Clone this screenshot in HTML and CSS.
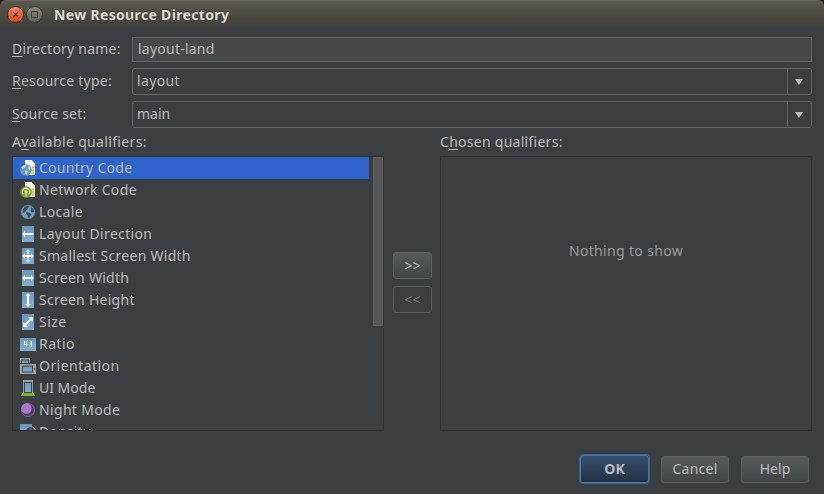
FILE: index.html
```html
<!DOCTYPE html>
<html lang="en">
<head>
<meta charset="utf-8">
<title>New Resource Directory</title>
<link rel="stylesheet" href="styles.css">
</head>
<body>
<svg class="defs" width="0" height="0">
  <defs>
    <linearGradient id="blue" x1="0" y1="0" x2="0" y2="1"><stop offset="0" stop-color="#689abd"/><stop offset="1" stop-color="#80add0"/></linearGradient>
    <symbol id="sim" viewBox="0 0 16 16"><path d="M5 0h6.500l3.500 3.500V15H5z" fill="#fff"/><path d="M11.500 7.500h2.500M11.500 10h2.500M11.500 12.500h2.500" stroke="#e5b920" stroke-width="2"/></symbol>
  </defs>
</svg>
<div class="window">
  <header class="titlebar">
    <span class="wbtn close"><svg width="15" height="15" viewBox="0 0 15 15"><path d="M5 5l5 5m0-5l-5 5" stroke="#56291a" stroke-width="1.300"/></svg></span>
    <span class="wbtn max"><svg width="15" height="15" viewBox="0 0 15 15"><path d="M4.500 4.500h6v6h-6z" fill="none" stroke="#3c3b37"/></svg></span>
    <h1 class="track-l">New Resource Directory</h1>
  </header>
  <main>
    <div class="field first"><label class="track-s"><u>D</u>irectory name:</label><div class="input"><span class="track-s">layout-land</span></div></div>
    <div class="field"><label class="track-s"><u>R</u>esource type:</label><div class="combo"><span class="track-l">layout</span><i><b></b></i></div></div>
    <div class="field"><label class="track-s"><u>S</u>ource set:</label><div class="combo"><span>main</span><i><b></b></i></div></div>
    <div class="panels">
      <section>
        <h2 class="track-l">A<u>v</u>ailable qualifiers:</h2>
        <div class="box">
          <ul>
            <li class="selected"><svg viewBox="0 0 16 16"><use href="#sim"/><circle cx="6" cy="10" r="5.800" fill="#6c9cc0"/><path d="M1.500 7.500l2.500-2.500 2 .5-1 2-1.500.5-.5 1.500zM5 10.500l2.500.5v1.500l-1 2.500-1.500-2zM8.500 6l2 2-.5 2-1.500-1z" fill="#d8e7f1"/></svg><span class="track-m">Country Code</span></li>
            <li><svg viewBox="0 0 16 16"><use href="#sim"/><circle cx="6" cy="10" r="5.800" fill="#7d9f22"/><path d="M6 10v5M3.300 12.300a3.600 3.600 0 1 1 5.400 0" fill="none" stroke="#e2ebc9" stroke-width="1.200"/><circle cx="6" cy="9.800" r="1.300" fill="#fff"/></svg><span class="track-l">Network Code</span></li>
            <li><svg viewBox="0 0 16 16"><circle cx="8" cy="8" r="7" fill="#71a0c3"/><path d="M2.500 6l2-3 3-1.300 2 .8-2 1.500.5 1-2 1.200-.5 1.300-1.500.2.500 1.500-1.500-.5zM6.500 8l3 .8 2 1.700-2.500 3.500-1.300-.8-.2-2-1.500-1.500zM11 3l2.500 2 .5 3-2 .5-1.500-1.500.5-1.500z" fill="#344b5b"/></svg><span class="track-l">Locale</span></li>
            <li><svg viewBox="0 0 16 16"><path d="M2 0h12v16H2z" fill="url(#blue)"/><path d="M4 8h10" stroke="#fff" stroke-width="2"/><path d="M2 8l3-3v6z" fill="#fff"/></svg><span class="track-l">Layout Direction</span></li>
            <li><svg viewBox="0 0 16 16"><path d="M2 0h12v16H2z" fill="url(#blue)"/><path d="M8 1l3 3H9v8h2l-3 3-3-3h2V4H5z" fill="#c1d8e8"/><path d="M2 8l3-3v2h6V5l3 3-3 3V9H5v2z" fill="#fff"/></svg><span class="track-m">Smallest Screen Width</span></li>
            <li><svg viewBox="0 0 16 16"><path d="M2 0h12v16H2z" fill="url(#blue)"/><path d="M2 8l3-3v2h6V5l3 3-3 3V9H5v2z" fill="#fff"/></svg><span class="track-m">Screen Width</span></li>
            <li><svg viewBox="0 0 16 16"><path d="M2 0h12v16H2z" fill="url(#blue)"/><path d="M8 1l3 3H9v8h2l-3 3-3-3h2V4H5z" fill="#fff"/></svg><span class="track-m">Screen Height</span></li>
            <li><svg viewBox="0 0 16 16"><path d="M2 0h12v16H2z" fill="url(#blue)"/><path d="M13 3v5l-1.700-1.700L6.300 11.300 8 13H3V8l1.700 1.700 5-5L8 3z" fill="#fff"/></svg><span class="track-xl">Size</span></li>
            <li><svg viewBox="0 0 16 16"><path d="M0 2h16v13H0z" fill="url(#blue)"/><path d="M4.500 5v3.500h3M6.500 5v6M10 5.500h1.500v5H10M10 8h2" fill="none" stroke="#fff"/><path d="M8 6h1v1H8zM8 9h1v1H8z" fill="#fff"/></svg><span class="track-xl">Ratio</span></li>
            <li><svg viewBox="0 0 16 16"><path d="M0 0h10v6H1v8H0z" fill="#9b9b9b"/><path d="M1 1.500h8V5H1z" fill="#404447"/><path d="M2 2.500h6V5H2z" fill="url(#blue)"/><path d="M0 5h16v11H0z" fill="#3c3f41"/><path d="M0 6h16v10H0z" fill="#a2a2a2"/><path d="M2 7.500h11v7H2z" fill="#404447"/><path d="M3 8.500h9v5H3z" fill="url(#blue)"/><path d="M14 10h1v2h-1z" fill="#404447"/></svg><span class="track-xl">Orientation</span></li>
            <li><svg viewBox="0 0 16 16"><path d="M3 0h10v13H3z" fill="#999"/><path d="M4 2h8v11H4z" fill="#3c4145"/><path d="M5 3h6v9H5z" fill="url(#blue)"/><path d="M2 13h12l1 3H1z" fill="#8bad20"/></svg><span>UI Mode</span></li>
            <li><svg viewBox="0 0 16 16"><circle cx="8" cy="8" r="6.500" fill="#503f60" stroke="#8c65a9"/><circle cx="6.500" cy="6.500" r="5.200" fill="#a47ac5"/></svg><span class="track-l">Night Mode</span></li>
            <li><svg viewBox="0 0 16 16"><path d="M0 0h12v14H0z" fill="url(#blue)"/><circle cx="10.500" cy="7.500" r="5" fill="#4c5358" stroke="#959b9f"/><path d="M8 8l4-2" stroke="#a8adb0"/></svg><span class="track-l">Density</span></li>
          </ul>
          <div class="scroll"></div>
        </div>
      </section>
      <nav><button>&gt;&gt;</button><button disabled>&lt;&lt;</button></nav>
      <section>
        <h2 class="track-m">C<u>h</u>osen qualifiers:</h2>
        <div class="box empty"><span class="track-l">Nothing to show</span></div>
      </section>
    </div>
  </main>
  <footer><button class="ok">OK</button><button><span class="track-s">Cancel</span></button><button><span>Help</span></button></footer>
</div>
</body>
</html>
```
FILE: styles.css
```css
* { box-sizing: border-box; }
body { margin: 0; background: #211f1e; font: 14px/22px "Noto Sans", "Open Sans", sans-serif; color: #bbb; }
.defs { display: block; }
.track-s { letter-spacing: .23px; }
.track-m { letter-spacing: .27px; }
.track-l { letter-spacing: .34px; }
.track-xl { letter-spacing: .45px; }
.window { width: 824px; height: 494px; display: flex; flex-direction: column; background: #3c3f41; border-radius: 6px 6px 0 0; overflow: hidden; white-space: nowrap; }
.titlebar { height: 28px; flex: none; display: flex; align-items: center; padding: 1px 7px 0; background: linear-gradient(#5b584f, #3e3d38); border-top: 1px solid #69665c; }
.wbtn { width: 17px; height: 17px; border-radius: 50%; border: 1px solid #34332f; margin: -1px 2px 0 0; display: flex; align-items: center; justify-content: center; flex: none; }
.wbtn svg { flex: none; }
.close { background: linear-gradient(#f58461, #dd491b); }
.max { background: linear-gradient(#8b8980, #62605a); }
h1 { font-size: 14px; line-height: 22px; font-weight: 700; color: #dfdbd2; margin: 0 0 0 9px; text-shadow: 0 -1px 0 #33322e; }
main { padding: 9px 12px 0; flex: 1; }
.field { display: flex; align-items: center; height: 27px; margin-bottom: 6px; }
.field.first { height: 25px; }
.field label { width: 120px; flex: none; padding-bottom: 1px; }
u { text-decoration: underline; text-decoration-thickness: 1px; text-underline-offset: 2px; text-decoration-skip-ink: none; }
.input, .combo { flex: 1; height: 100%; border: 1px solid #646464; display: flex; align-items: center; }
.input { background: #45494a; padding-left: 5px; }
.input span, .combo span { padding-bottom: 2px; }
.combo { border-radius: 3px; padding-left: 4px; }
.combo i { width: 24px; height: 100%; margin-left: auto; border-left: 1px solid #646464; display: flex; align-items: center; justify-content: center; }
.combo b { border: 4px solid transparent; border-top: 6px solid #bbb; border-bottom: 0; margin-right: 1px; }
.panels { display: flex; }
section { width: 372px; }
h2 { font: inherit; margin: -3px 0 3px; height: 22px; }
.box { height: 275px; border: 1px solid #323232; display: flex; overflow: hidden; }
ul { list-style: none; margin: 0; padding: 0; width: 356px; }
li { height: 22px; display: flex; align-items: center; padding-left: 7px; gap: 3px; }
li svg { width: 16px; height: 16px; flex: none; }
.selected { background: #2f65ca; }
.scroll { margin-left: auto; width: 10px; height: 169px; background: #555657; border: 1px solid #606162; }
nav { width: 56px; padding: 118px 0 0 9px; display: flex; flex-direction: column; gap: 7px; }
button { font: inherit; color: #bbb; height: 27px; padding: 0; border: 1px solid #5e6060; border-radius: 3px; background: linear-gradient(#555a5c, #414647); display: flex; align-items: center; justify-content: center; }
nav button { width: 39px; }
button:disabled { background: none; color: #777; border-color: #5b5d5e; }
.empty { padding-top: 83px; justify-content: center; color: #999; }
footer { height: 38px; padding-right: 15px; display: flex; justify-content: flex-end; gap: 12px; }
footer button { width: 68px; }
footer span { padding-bottom: 2px; }
footer .ok { width: 69px; height: 28px; margin-top: -1px; font-weight: 700; background: linear-gradient(#384f6b, #233143); border-color: #4c7aa8; box-shadow: 0 0 0 1px #3f668e; }
```
